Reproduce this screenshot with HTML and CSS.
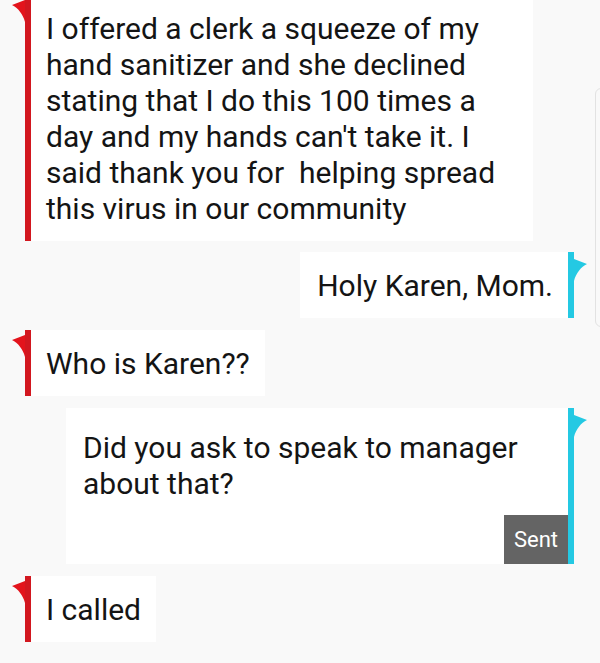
FILE: index.html
```html
<!DOCTYPE html>
<html lang="en">
<head>
  <meta charset="UTF-8">
  <meta name="viewport" content="width=device-width, initial-scale=1.0">
  <title>Messages</title>
  <link rel="stylesheet" href="styles.css">
</head>
<body>
  <div class="chat">
    <div class="msg in first">
      <svg class="tail" viewBox="0 0 13 22"><path d="M13 0 L0 5 C6 8 11 14 13 22 Z"/></svg>
      <p>I offered a clerk a squeeze of my hand sanitizer and she declined stating that I do this 100 times a day and my hands can't take it. I said thank you for&nbsp; helping spread this virus in our community</p>
    </div>
    <div class="msg out">
      <svg class="tail" viewBox="0 0 13 22"><path d="M0 0 L13 5 C7 8 2 14 0 22 Z"/></svg>
      <p>Holy Karen, Mom.</p>
    </div>
    <div class="msg in">
      <svg class="tail" viewBox="0 0 13 22"><path d="M13 0 L0 5 C6 8 11 14 13 22 Z"/></svg>
      <p>Who is Karen??</p>
    </div>
    <div class="msg out wide">
      <svg class="tail" viewBox="0 0 13 22"><path d="M0 0 L13 5 C7 8 2 14 0 22 Z"/></svg>
      <p>Did you ask to speak to manager about that?</p>
      <span class="status">Sent</span>
    </div>
    <div class="msg in">
      <svg class="tail" viewBox="0 0 13 22"><path d="M13 0 L0 5 C6 8 11 14 13 22 Z"/></svg>
      <p>I called</p>
    </div>
  </div>
  <div class="scroll-edge"></div>
</body>
</html>
```

FILE: styles.css
```css
* {
  margin: 0;
  padding: 0;
  box-sizing: border-box;
}
body {
  background: #f9f9f9;
  font-family: Roboto, 'Noto Sans', sans-serif;
  color: #141414;
  overflow: hidden;
  position: relative;
  height: 663px;
}
.chat {
  display: flex;
  flex-direction: column;
  gap: 12px;
  padding: 0 26px 0 25px;
}
.msg {
  position: relative;
  max-width: 508px;
  background: #fff;
  font-size: 30px;
  line-height: 36px;
}
.msg p {
  padding: 16px 15px 14px;
}
.msg.in {
  align-self: flex-start;
  border-left: 6px solid #d2171f;
}
.msg.out {
  align-self: flex-end;
  border-right: 6px solid #24c9e3;
}
.msg.out p {
  padding-left: 17px;
}
.msg.first {
  margin-top: -5px;
  margin-bottom: -1px;
}
.tail {
  position: absolute;
  top: 5px;
  width: 13px;
  height: 22px;
}
.in .tail {
  left: -19px;
  fill: #e3141c;
}
.out .tail {
  right: -19px;
  top: 7px;
  fill: #24c9e3;
}
.msg.wide {
  width: 509px;
  display: flex;
  flex-direction: column;
}
.msg.wide p {
  padding: 22px 17px 0;
}
.status {
  align-self: flex-end;
  width: 64px;
  height: 49px;
  margin-top: 13px;
  background: #646464;
  color: #fff;
  font-size: 22px;
  display: flex;
  align-items: center;
  justify-content: center;
}
.scroll-edge {
  position: absolute;
  top: 88px;
  right: -10px;
  width: 15px;
  height: 239px;
  border: 1px solid #e2e2e2;
  border-radius: 6px;
}
```
